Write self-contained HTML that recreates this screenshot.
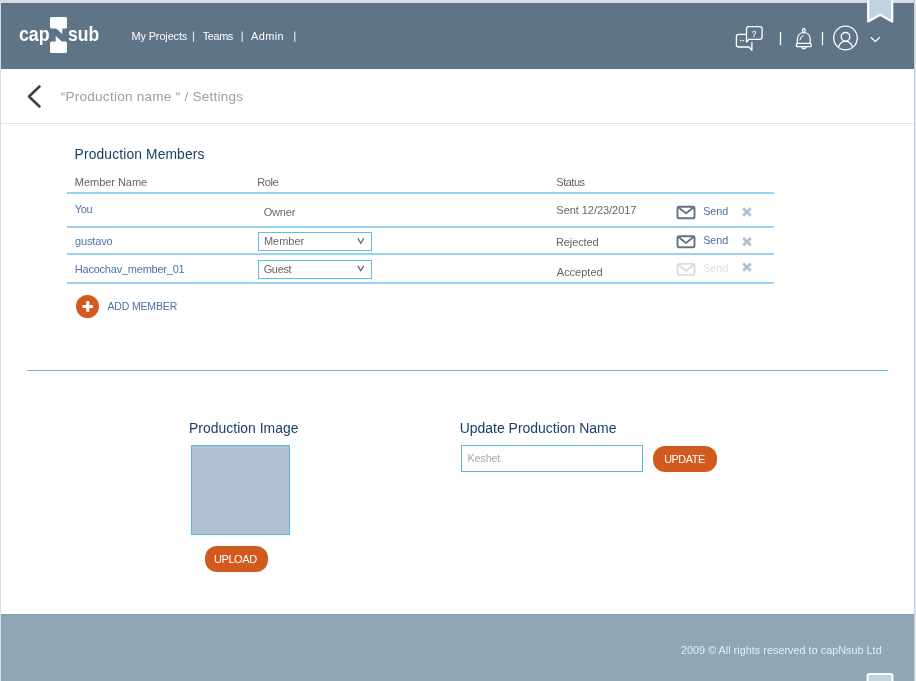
<!DOCTYPE html>
<html><head><meta charset="utf-8">
<style>
*{margin:0;padding:0;box-sizing:border-box}
html,body{width:916px;height:681px;overflow:hidden;background:#ffffff;font-family:"Liberation Sans",sans-serif}
.a{position:absolute}
svg{position:absolute;left:0;top:0;will-change:transform}
text{font-family:"Liberation Sans",sans-serif}
</style></head><body>
<!-- outer light frame -->
<div class="a" style="left:0;top:0;width:916px;height:3px;background:#d5dce4"></div>
<div class="a" style="left:0;top:0;width:1px;height:681px;background:#d5dce4"></div>
<div class="a" style="left:914px;top:0;width:1px;height:681px;background:#c9d2dc"></div><div class="a" style="left:915px;top:0;width:1px;height:681px;background:#e0e5eb"></div>
<!-- header -->
<div class="a" style="left:1px;top:3px;width:913px;height:66px;background:#5f7487"></div>
<!-- breadcrumb divider -->
<div class="a" style="left:1px;top:123px;width:913px;height:1px;background:#e2e2e2"></div>
<!-- table lines -->
<div class="a" style="left:67px;top:192px;width:707px;height:2px;background:#98d3f1"></div>
<div class="a" style="left:67px;top:226px;width:707px;height:2px;background:#98d3f1"></div>
<div class="a" style="left:67px;top:253px;width:707px;height:2px;background:#98d3f1"></div>
<div class="a" style="left:67px;top:282px;width:707px;height:2px;background:#98d3f1"></div>
<!-- selects -->
<div class="a" style="left:258px;top:232px;width:114px;height:19px;border:1px solid #66bbe8"></div>
<div class="a" style="left:258px;top:260px;width:114px;height:19px;border:1px solid #66bbe8"></div>
<!-- separator -->
<div class="a" style="left:27px;top:370px;width:861px;height:1px;background:#5fb8e6"></div>
<!-- image box -->
<div class="a" style="left:191px;top:445px;width:99px;height:90px;background:#aec0d2;border:1px solid #5ab5e8"></div>
<!-- upload btn -->
<div class="a" style="left:205px;top:546px;width:63px;height:26px;border-radius:12px;background:#d35a1f"></div>
<!-- input -->
<div class="a" style="left:461px;top:445px;width:182px;height:27px;border:1px solid #5ab5e8"></div>
<!-- update btn -->
<div class="a" style="left:653px;top:446px;width:64px;height:26px;border-radius:12px;background:#d35a1f"></div>
<!-- add member circle -->
<div class="a" style="left:76.2px;top:295.1px;width:23px;height:23px;border-radius:50%;background:#d35a1f"></div>
<!-- footer -->
<div class="a" style="left:1px;top:614px;width:913px;height:67px;background:#8fa6b3"></div>
<div class="a" style="left:1px;top:614px;width:913px;height:1px;background:#879ead"></div>

<svg width="916" height="681" viewBox="0 0 916 681">
<!-- logo N -->
<g fill="#ffffff">
<rect x="50" y="17" width="17" height="11.5" rx="1.5"/>
<rect x="50" y="41.5" width="17" height="11.5" rx="1.5"/>
<polygon points="55.7,28 62.3,28 62.3,34"/>
<polygon points="55.7,36 55.7,42 62.3,42"/>
</g>
<!-- back chevron -->
<path d="M39.5 86.5 L29 96.5 L39.5 106.5" fill="none" stroke="#414141" stroke-width="2.6" stroke-linecap="round" stroke-linejoin="round"/>
<!-- header icons -->
<g fill="none" stroke="#ffffff" stroke-width="1.3" stroke-linejoin="round">
<path d="M746.5 42 V29 Q746.5 26.7 748.8 26.7 H759.8 Q762.1 26.7 762.1 29 V37 Q762.1 39.3 759.8 39.3 H749 Z"/>
<path d="M746.5 34.4 H738.7 Q736.4 34.4 736.4 36.7 V44.7 Q736.4 47 738.7 47 H749 L751.9 50.3 V42"/>
<line x1="780.5" y1="31.8" x2="780.5" y2="45.2"/>
<line x1="822.5" y1="31.8" x2="822.5" y2="45.2"/>
<path d="M797.4 43.4 V39.2 C797.4 35.2 800.2 32.7 803.8 32.7 C807.4 32.7 810.2 35.2 810.2 39.2 V43.4"/>
<path d="M797.4 43.4 Q796.3 44.2 796.3 45.5 Q796.3 46.7 797.5 46.7 H810.1 Q811.3 46.7 811.3 45.5 Q811.3 44.2 810.2 43.4 Z"/>
<ellipse cx="803.8" cy="30.4" rx="1.3" ry="1.9"/>
<path d="M801.9 46.8 A1.9 1.9 0 0 0 805.7 46.8"/>
<path d="M800 40.2 Q800.2 36.4 803.6 35.4" stroke-width="1"/>
<circle cx="845.5" cy="38" r="11.8"/>
<circle cx="845.5" cy="36.8" r="4.3"/>
<path d="M838.6 46.8 C839.8 43.2 842.3 41.3 845.5 41.3 C848.7 41.3 851.2 43.2 852.4 46.8"/>
<path d="M870.8 37.2 L875.3 41.5 L879.8 37.2" stroke-width="1.2"/>
</g>
<!-- bookmark top -->
<path d="M868.2 -2 V21.5 L880.2 14.8 L892.2 21.5 V-2 Z" fill="#bfd2e0" stroke="#ffffff" stroke-width="2.2" stroke-linejoin="round"/>
<!-- bookmark bottom -->
<path d="M867.5 690 V676 Q867.5 674 869.5 674 H890.5 Q892.5 674 892.5 676 V690 Z" fill="#bfd2e0" stroke="#ffffff" stroke-width="2"/>
<!-- mail icons -->
<g fill="none" stroke-width="1.9" stroke-linejoin="round">
<g stroke="#5f7487">
<rect x="677.5" y="206.7" width="17" height="11.6" rx="1.6"/>
<path d="M678.5 207.5 L686 213.3 L693.5 207.5"/>
<rect x="677.5" y="236.2" width="17" height="11" rx="1.6"/>
<path d="M678.5 237 L686 243 L693.5 237"/>
</g>
<g stroke="#d6dee6">
<rect x="677.5" y="263.9" width="17" height="11" rx="1.6"/>
<path d="M678.5 264.7 L686 270.7 L693.5 264.7"/>
</g>
</g>
<!-- X icons -->
<g stroke="#adbfd2" stroke-width="2.7" stroke-linecap="butt">
<path d="M743.2 208.3 L750.8 215.8 M750.8 208.3 L743.2 215.8"/>
<path d="M743.2 238 L750.8 245.4 M750.8 238 L743.2 245.4"/>
<path d="M743.2 263.6 L750.8 270.8 M750.8 263.6 L743.2 270.8"/>
</g>
<!-- select chevrons -->
<g fill="none" stroke="#53667a" stroke-width="1.25">
<path d="M357.9 238.3 L360.8 243.2 L363.7 238.3"/>
<path d="M357.9 265.9 L360.8 270.8 L363.7 265.9"/>
</g>
<!-- plus -->
<path d="M87.7 301.3 V311.7 M82.5 306.5 H92.9" stroke="#ffffff" stroke-width="3.1" stroke-linecap="butt"/>
<!-- logo words -->
<text transform="translate(18.9,40.5) scale(0.894,1)" x="0" y="0" font-size="20" font-weight="bold" fill="#ffffff">cap</text>
<text transform="translate(68,40.5) scale(0.878,1)" x="0" y="0" font-size="20" font-weight="bold" fill="#ffffff">sub</text>
<g fill="#dde4ea"><rect x="192.9" y="31.5" width="1.2" height="10.3"/><rect x="241.6" y="31.5" width="1.2" height="10.3"/><rect x="294.2" y="31.5" width="1.2" height="10.3"/></g>
<text transform="translate(751.9,36.9) scale(0.8,1)" x="0" y="0" font-size="9.4" fill="#ffffff" stroke="#ffffff" stroke-width="0.2">?</text>
<path d="M740 40.6 H744" stroke="#dfe6ec" stroke-width="1.2" stroke-dasharray="1.6 0.8"/>
<text x="131.53" y="39.70" font-size="10.90" letter-spacing="-0.113" fill="#ffffff">My Projects</text>
<text x="202.78" y="39.70" font-size="10.90" letter-spacing="-0.390" fill="#ffffff">Teams</text>
<text x="251.00" y="39.70" font-size="10.90" letter-spacing="0.429" fill="#ffffff">Admin</text>
<text x="60.69" y="101.40" font-size="13.60" letter-spacing="0.228" fill="#a19e9c">“Production name “ / Settings</text>
<text x="74.60" y="158.90" font-size="13.80" letter-spacing="0.147" fill="#193f6a">Production Members</text>
<text x="74.82" y="185.80" font-size="11.00" letter-spacing="-0.036" fill="#646464">Member Name</text>
<text x="257.22" y="185.50" font-size="11.00" letter-spacing="-0.382" fill="#646464">Role</text>
<text x="556.36" y="185.70" font-size="11.00" letter-spacing="-0.503" fill="#646464">Status</text>
<text x="74.78" y="212.90" font-size="11.00" letter-spacing="-0.307" fill="#4c73ae">You</text>
<text x="263.66" y="215.60" font-size="11.00" letter-spacing="-0.179" fill="#6e6663">Owner</text>
<text x="556.36" y="213.90" font-size="11.00" letter-spacing="-0.049" fill="#646464">Sent 12/23/2017</text>
<text x="703.27" y="214.90" font-size="10.80" letter-spacing="-0.095" fill="#4a6fa8">Send</text>
<text x="74.96" y="244.90" font-size="11.00" letter-spacing="-0.132" fill="#4c73ae">gustavo</text>
<text x="263.92" y="244.70" font-size="11.00" letter-spacing="-0.004" fill="#6e6663">Member</text>
<text x="555.92" y="245.90" font-size="11.00" letter-spacing="-0.088" fill="#646464">Rejected</text>
<text x="74.82" y="272.60" font-size="11.00" letter-spacing="-0.226" fill="#4c73ae">Hacochav_member_01</text>
<text x="263.65" y="272.80" font-size="11.00" letter-spacing="-0.330" fill="#6e6663">Guest</text>
<text x="556.80" y="275.80" font-size="11.00" letter-spacing="-0.007" fill="#646464">Accepted</text>
<text x="107.40" y="309.70" font-size="10.50" letter-spacing="-0.148" fill="#4a72ad">ADD MEMBER</text>
<text x="189.09" y="432.70" font-size="13.90" letter-spacing="0.031" fill="#193f6a">Production Image</text>
<text x="459.72" y="433.30" font-size="14.00" letter-spacing="-0.020" fill="#193f6a">Update Production Name</text>
<text x="467.44" y="462.40" font-size="10.80" letter-spacing="-0.137" fill="#a8a8a8">Keshet</text>
<text x="664.24" y="463.30" font-size="10.80" letter-spacing="-0.430" fill="#ffffff">UPDATE</text>
<text x="213.93" y="563.00" font-size="11.00" letter-spacing="-0.400" fill="#ffffff">UPLOAD</text>
<text x="680.96" y="654.00" font-size="10.80" letter-spacing="0.032" fill="#e6edf1">2009 © All rights reserved to capNsub Ltd</text>
<text x="703.27" y="244.2" font-size="10.8" letter-spacing="-0.095" fill="#4a6fa8">Send</text>
<text x="703.27" y="271.8" font-size="10.8" letter-spacing="-0.095" fill="#dbe3ec">Send</text>

</svg>
</body></html>
